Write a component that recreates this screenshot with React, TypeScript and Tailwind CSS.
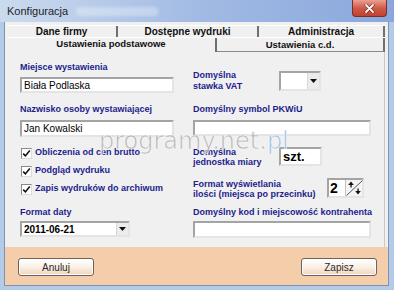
import React from 'react'

const label = 'text-[9px] font-bold text-[#1d1d8c] leading-[12px] h-[12px] whitespace-nowrap'
const sunken = 'bg-white border-2 border-t-[#a4a4a4] border-l-[#a4a4a4] border-b-[#e4e4e4] border-r-[#e4e4e4]'

const Arrow = () => (
  <svg width="7" height="4" viewBox="0 0 7 4">
    <polygon points="0,0 7,0 3.5,4" fill="#111" />
  </svg>
)

interface ComboProps {
  value?: string
  className?: string
}

const Combo: React.FC<ComboProps> = ({ value = '', className = '' }) => (
  <div className={`flex items-stretch ${sunken} ${className}`}>
    <div className="flex-1 flex items-center pl-[2px] text-[10px] font-bold text-black">{value}</div>
    <div className="w-[12px] bg-[#ececec] border-l border-[#d8d8d8] flex items-center justify-center">
      <Arrow />
    </div>
  </div>
)

const Check: React.FC<{ text: string }> = ({ text }) => (
  <div className="h-[18px] flex items-center gap-[3px] ml-[1px]">
    <div className="w-[11px] h-[11px] bg-white border border-t-[#8a8a8a] border-l-[#8a8a8a] border-b-[#dcdcdc] border-r-[#dcdcdc] flex items-center justify-center">
      <svg width="9" height="9" viewBox="0 0 9 9">
        <path d="M1.2 4.6 L3.4 6.9 L7.8 1.6" fill="none" stroke="#111" strokeWidth="1.6" />
      </svg>
    </div>
    <span className="text-[9px] font-bold text-[#1d1d8c] whitespace-nowrap">{text}</span>
  </div>
)

const FooterButton: React.FC<{ text: string }> = ({ text }) => (
  <button className="w-[76px] h-[18px] rounded-[3px] border border-[#6f625a] bg-linear-to-b from-[#ffffff] via-[#fbf0e7] to-[#f1d4bc] text-[10px] text-[#2a2a2a] flex items-center justify-center shadow-[inset_0_0_0_1px_#fff]">
    {text}
  </button>
)

export default function App() {
  return (
    <div className="w-[394px] h-[290px] bg-[#b3cbe9] flex flex-col relative overflow-hidden font-['Liberation_Sans',Arial,sans-serif]">
      {/* title bar */}
      <div className="h-[22px] flex items-start bg-linear-to-r from-[#cbdbee] via-[#a2bbe4] to-[#8aa7dd]">
        <div className="h-[22px] flex items-center pl-[7px] text-[11px] text-[#1e1e1e]">Konfiguracja</div>
        <div className="ml-[8px] mt-[7px] w-[82px] h-[9px] rounded bg-white/30 blur-[1.5px]" />
        <div className="ml-auto mr-[7px] w-[35px] h-[17px] rounded-b-[4px] border border-t-0 border-[#7b2f28] bg-linear-to-b from-[#e9a092] via-[#cf5a48] to-[#c0422f] flex items-center justify-center">
          <svg width="11" height="9" viewBox="0 0 11 9">
            <path d="M2 1 L9 8 M9 1 L2 8" stroke="#5a1a14" strokeWidth="3" strokeLinecap="round" />
            <path d="M2 1 L9 8 M9 1 L2 8" stroke="#fff" strokeWidth="1.8" strokeLinecap="round" />
          </svg>
        </div>
      </div>

      {/* client */}
      <div className="ml-[4px] w-[385px] h-[264px] border-l border-r border-b border-[#7f93ae] bg-[#f0f0f0] flex flex-col">
        <div className="pt-[3px]">
          <div className="ml-[2px] w-[378px] h-[12px] flex border-t border-white text-[10px] font-bold text-[#111] leading-[11px]">
            <div className="w-[111px] border-r-2 border-[#6f6f6f] flex justify-center">Dane firmy</div>
            <div className="w-[141px] border-r-2 border-[#6f6f6f] flex justify-center">Dostępne wydruki</div>
            <div className="flex-1 border-r-2 border-[#6f6f6f] flex justify-center">Administracja</div>
          </div>
          <div className="ml-[2px] w-[378px] h-[15px] flex border-t border-white text-[9.5px] font-bold text-[#111]">
            <div className="w-[210px] border-r-2 border-[#6f6f6f] flex justify-center leading-[12px]">Ustawienia podstawowe</div>
            <div className="flex-1 border-r-2 border-b border-[#6f6f6f] border-b-[#8a8a8a] flex justify-center items-end leading-[12px]">Ustawienia c.d.</div>
          </div>
        </div>

        {/* panel */}
        <div className="ml-[2px] w-[378px] h-[195px] border-r border-[#c9c9c9] flex pl-[13px]">
          <div className="w-[154px] flex flex-col">
            <div className={`mt-[9px] ${label}`}>Miejsce wystawienia</div>
            <div className={`mt-[4px] h-[16px] ${sunken} flex items-center pl-[2px] text-[10px] text-black`}>Biała Podlaska</div>
            <div className={`mt-[10px] ${label}`}>Nazwisko osoby wystawiającej</div>
            <div className={`mt-[5px] h-[17px] ${sunken} flex items-center pl-[2px] text-[10px] text-black`}>Jan Kowalski</div>
            <div className="mt-[7px]">
              <Check text="Obliczenia od cen brutto" />
              <Check text="Podgląd wydruku" />
              <Check text="Zapis wydruków do archiwum" />
            </div>
            <div className={`mt-[8px] ${label}`}>Format daty</div>
            <Combo value="2011-06-21" className="mt-[3px] h-[16px] w-[110px]" />
          </div>

          <div className="ml-[19px] w-[178px] flex flex-col">
            <div className="mt-[19px] h-[20px] flex items-center">
              <div className="w-[86px] text-[9px] font-bold text-[#1d1d8c] leading-[11px]">Domyślna<br />stawka VAT</div>
              <Combo className="h-[20px] w-[42px]" />
            </div>
            <div className={`mt-[12px] ${label}`}>Domyślny symbol PKWiU</div>
            <div className={`mt-[5px] h-[16px] ${sunken}`} />
            <div className="mt-[11px] h-[19px] flex items-center">
              <div className="w-[86px] text-[9px] font-bold text-[#1d1d8c] leading-[10px]">Domyślna<br />jednostka miary</div>
              <div className={`w-[43px] h-[19px] ${sunken} flex items-center pl-[2px] text-[13px] font-bold text-black`}>szt.</div>
            </div>
            <div className="mt-[12px] h-[20px] flex items-center">
              <div className="w-[134px] mt-[2px] text-[9px] font-bold text-[#1d1d8c] leading-[10px] whitespace-nowrap">Format wyświetlania<br />ilości (miejsca po przecinku)</div>
              <div className={`w-[37px] h-[20px] ${sunken} flex items-stretch`}>
                <div className="flex-1 flex items-center pl-[1px] text-[14px] font-bold text-black">2</div>
                <div className="w-[17px] bg-[#f4f4f4] border-l border-[#c4c4c4]">
                  <svg width="17" height="16" viewBox="0 0 17 16">
                    <path d="M0.5 15.5 L16.5 0.5" stroke="#555" strokeWidth="1" />
                    <polygon points="5,1.5 2.2,5 7.8,5" fill="#111" />
                    <rect x="4.4" y="4.5" width="1.3" height="3" fill="#111" />
                    <polygon points="12,14.5 9.2,11 14.8,11" fill="#111" />
                    <rect x="11.4" y="8.5" width="1.3" height="3" fill="#111" />
                  </svg>
                </div>
              </div>
            </div>
            <div className={`mt-[8px] ${label}`}>Domyślny kod i miejscowość kontrahenta</div>
            <div className={`mt-[3px] h-[17px] ${sunken}`} />
          </div>
        </div>

        {/* footer */}
        <div className="h-[38px] bg-[#f4cdab] flex items-start justify-between pt-[11px] pl-[13px] pr-[11px]">
          <FooterButton text="Anuluj" />
          <FooterButton text="Zapisz" />
        </div>
      </div>

      {/* watermark */}
      <div className="absolute left-[99px] top-[128px] text-[24px] leading-[26px] font-['DejaVu_Sans',sans-serif] text-[#a2a2a2]/70 pointer-events-none whitespace-nowrap [-webkit-text-stroke:0.7px_rgba(255,255,255,0.8)]">
        programy.net.<span className="text-[#8db3dc]/75">pl</span>
      </div>
    </div>
  )
}
